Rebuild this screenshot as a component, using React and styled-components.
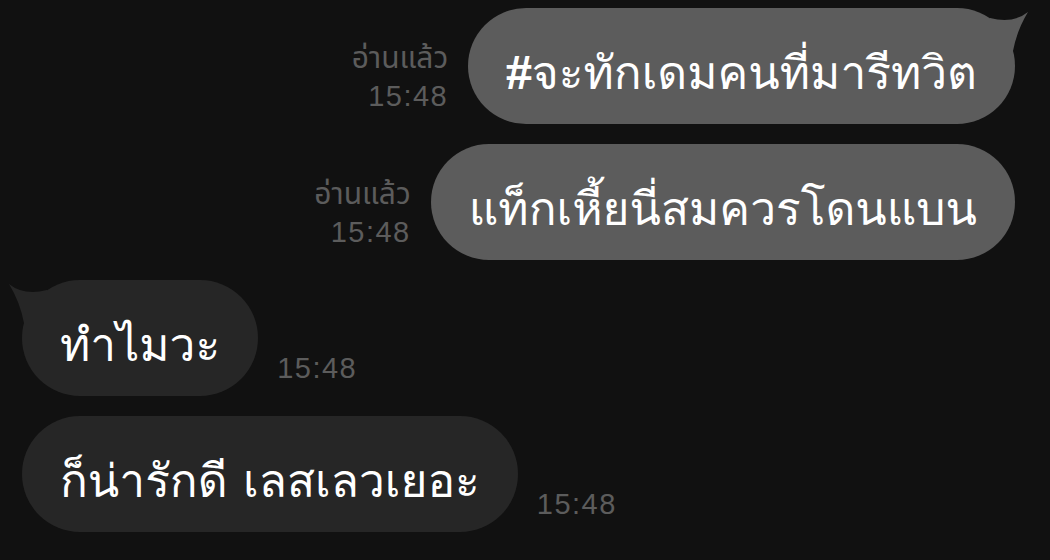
import styled, { createGlobalStyle } from 'styled-components'

const GlobalStyle = createGlobalStyle`
    html, body {
        margin: 0;
        padding: 0;
        background: #111111;
    }
    body {
        font-family: "Thonburi", "Loma", "Garuda", "Waree", "Noto Sans Thai Looped", "Noto Sans Thai", "Noto Sans", sans-serif;
    }
`;

const Chat = styled.div`
    width: 1050px;
    height: 560px;
    box-sizing: border-box;
    padding: 8px 35px 0 22px;
    display: flex;
    flex-direction: column;
    gap: 20px;
    background: #111111;
    overflow: hidden;
`;

const Row = styled.div`
    display: flex;
    align-items: flex-end;
    justify-content: ${props => props.mine ? 'flex-end' : 'flex-start'};
    gap: ${props => props.mine ? '20px' : '19px'};
`;

const Meta = styled.div`
    display: flex;
    flex-direction: column;
    align-items: ${props => props.mine ? 'flex-end' : 'flex-start'};
    margin-bottom: 9px;
    color: #5c5c5c;
    font-family: "Liberation Sans", Arial, "Noto Sans Thai", sans-serif;
    font-size: 29px;
    line-height: 38px;
`;

const ReadLabel = styled.span`
    font-size: 30px;
    line-height: 38px;
`;

const Time = styled.span`
    letter-spacing: 1.5px;
`;

const Bubble = styled.div`
    position: relative;
    height: 116px;
    box-sizing: border-box;
    display: flex;
    align-items: center;
    padding: 12px 38px 0;
    border-radius: 58px;
    background: ${props => props.mine ? '#5c5c5c' : '#262626'};
    color: #ffffff;
    font-size: 46px;
    white-space: nowrap;
`;

const Tail = styled.svg`
    position: absolute;
    top: 0;
    width: 45px;
    height: 45px;
    ${props => props.mine
        ? 'right: -15px;'
        : 'left: -15px; transform: scaleX(-1);'}
`;

function BubbleTail({ mine }) {
    return (
        <Tail mine={mine} viewBox="0 0 45 45">
            <path
                d="M 5 10 Q 28 16 43 4 Q 32 22 28 43 L 5 43 Z"
                fill={mine ? '#5c5c5c' : '#262626'}
            />
        </Tail>
    )
}

const messages = [
    { mine: true, text: '#จะทักเดมคนที่มารีทวิต', tail: true },
    { mine: true, text: 'แท็กเหี้ยนี่สมควรโดนแบน' },
    { mine: false, text: 'ทำไมวะ', tail: true },
    { mine: false, text: 'ก็น่ารักดี เลสเลวเยอะ' },
]

export default function App() {
    return (
        <>
            <GlobalStyle />
            <Chat>
                {messages.map((m, i) => {
                    const meta = (
                        <Meta mine={m.mine}>
                            {m.mine && <ReadLabel>อ่านแล้ว</ReadLabel>}
                            <Time>15:48</Time>
                        </Meta>
                    )
                    const bubble = (
                        <Bubble mine={m.mine}>
                            {m.tail && <BubbleTail mine={m.mine} />}
                            {m.text}
                        </Bubble>
                    )
                    return (
                        <Row key={i} mine={m.mine}>
                            {m.mine ? meta : bubble}
                            {m.mine ? bubble : meta}
                        </Row>
                    )
                })}
            </Chat>
        </>
    )
}
